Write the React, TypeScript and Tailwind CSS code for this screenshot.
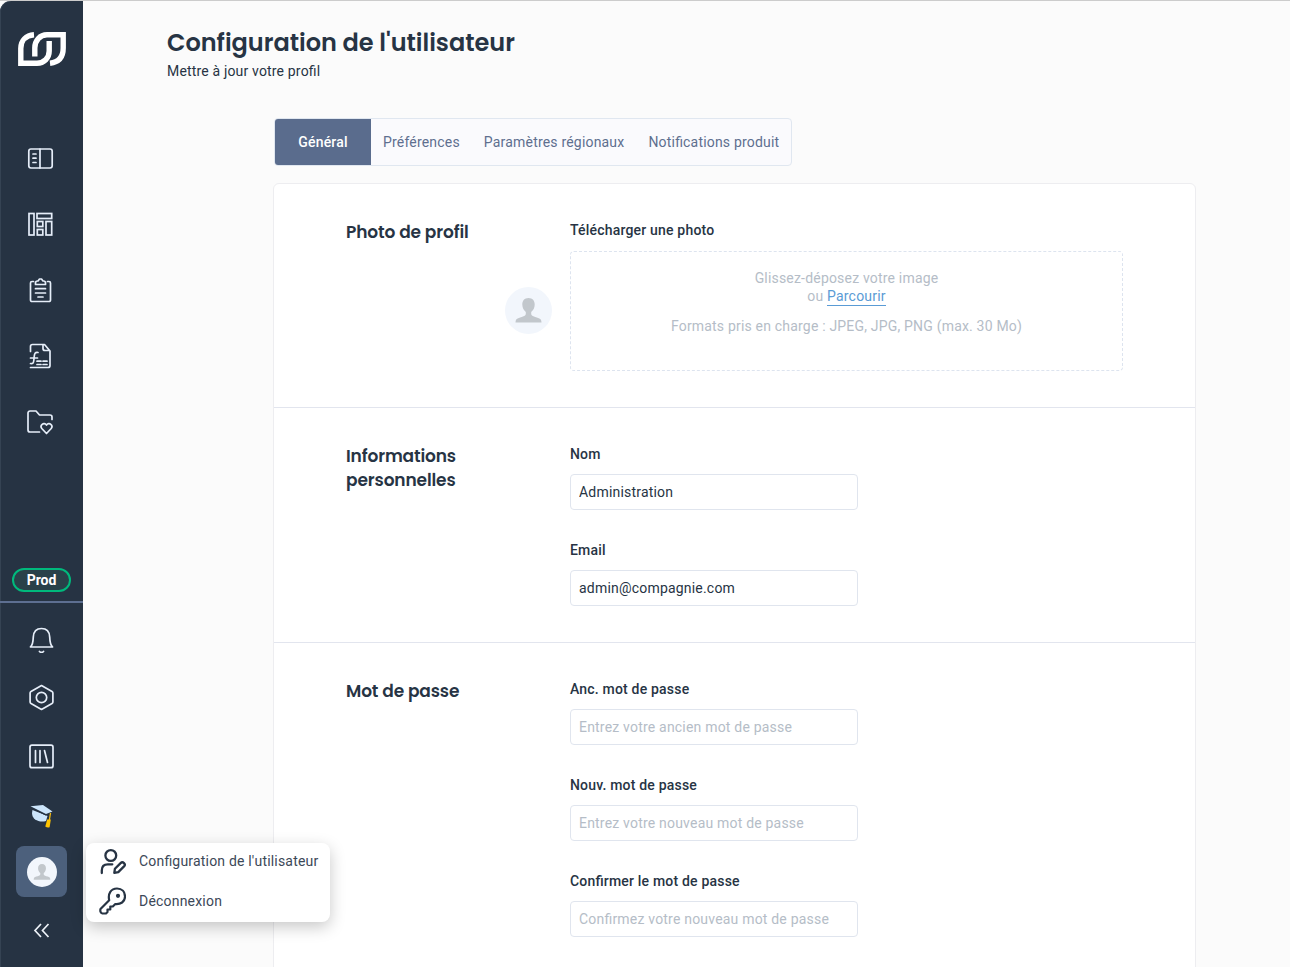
import type { ReactNode } from "react";

const heading = "font-[Poppins,Inter,sans-serif] font-semibold text-[#273444]";

function Logo() {
  return (
    <svg width="50" height="36" viewBox="17 31 50 36" fill="none" stroke="#fff" strokeWidth="5.4">
      <path d="M34 34.8C26 35.4 20.8 40.500 20.8 48.500V63.2H37C44 63.2 49.2 58 49.2 51V41" />
      <path d="M34.8 56.5V48C34.8 40.500 40 34.8 47 34.8H63.2V48C63.2 57 59 62.2 50 63.2" />
    </svg>
  );
}

function Icon({ children }: { children: ReactNode }) {
  return (
    <svg width="28" height="28" viewBox="-0.5 -0.5 28 28" fill="none" stroke="#e6eef9" strokeWidth="1.7" strokeLinecap="round" strokeLinejoin="round">
      {children}
    </svg>
  );
}

function Avatar({ className }: { className: string }) {
  return (
    <svg viewBox="0 0 47 47" className={className}>
      <circle cx="23.5" cy="23.5" r="23.5" fill="#f2f6fc" />
      <path fill="#c2c7cc" d="M23.5 11c-4 0-6.2 2.8-6.2 6.6 0 3.2 1.500 6 3.500 7.400v2.300c-.5 1.800-3.200 2.600-6.300 3.400-2.900.7-4 1.900-4 4.900h26c0-3-1.100-4.200-4-4.900-3.100-.8-5.800-1.600-6.300-3.400V25c2-1.400 3.500-4.200 3.500-7.400 0-3.800-2.200-6.600-6.200-6.600z" />
    </svg>
  );
}

function Sidebar() {
  return (
    <aside className="flex h-[966px] w-[83px] shrink-0 flex-col items-center rounded-tl-[11px] bg-[#263343] shadow-[inset_1px_0_0_#354353]">
      <div className="flex h-[124px] items-start pt-[30px] pl-px"><Logo /></div>
      <nav className="flex h-[443px] flex-col items-center pr-[3px]">
        <div className="flex h-[66px] items-center">
          <Icon>
            <rect x="2.300" y="4.500" width="23.400" height="19" rx="2.200" />
            <path d="M13.500 4.500v19M6.500 9.500h3M6.500 13.700h3M6.500 18h3" />
          </Icon>
        </div>
        <div className="flex h-[66px] items-center">
          <Icon>
            <g strokeLinejoin="miter">
              <rect x="2.500" y="3" width="5" height="21.500" />
              <rect x="10.500" y="3" width="14.700" height="5" />
              <rect x="10.800" y="11" width="5.500" height="5" />
              <rect x="10.800" y="19" width="5.500" height="5.500" />
              <rect x="19.500" y="11" width="5.700" height="13.500" />
            </g>
          </Icon>
        </div>
        <div className="flex h-[66px] items-center">
          <Icon>
            <path d="M7 5H5.500A1.500 1.500 0 0 0 4 6.500v17a1.500 1.500 0 0 0 1.500 1.500h17A1.500 1.500 0 0 0 24 23.500v-17A1.500 1.500 0 0 0 22.500 5H21M9 8V6.500a2 2 0 0 1 2-2h.5l1.500-2h2l1.500 2h.5a2 2 0 0 1 2 2V8zM9 12.200h10M9 16.500h10M11.500 20.500h5" />
          </Icon>
        </div>
        <div className="flex h-[66px] items-center">
          <Icon>
            <path d="M4 9V4A2 2 0 0 1 6 2h12l5.500 6.500v14.500a2 2 0 0 1-2 2H4M16.500 2v4a2 2 0 0 0 2 2h4M11.500 10c-3-.5-3.500 1-3.800 4l-.4 4c-.2 2.500-1 3.300-3.300 3M4 15.500h7M10.500 18.700h4M16.500 18.700h4M10.500 22h4M16.500 22h4" />
          </Icon>
        </div>
        <div className="flex h-[66px] items-center">
          <Icon>
            <path d="M13 23.500H3.500a2 2 0 0 1-2-2v-17a2 2 0 0 1 2-2h6l3.500 4h10.500a2 2 0 0 1 2 2V11M20 25l-4.700-5c-2.300-3 1.800-7 4.700-3.500 2.900-3.500 7 .5 4.700 3.500z" />
          </Icon>
        </div>
      </nav>
      <div className="flex h-6 w-[59px] items-center justify-center rounded-full border-2 border-[#00b97c] bg-[#294149] text-sm font-bold text-white">Prod</div>
      <div className="mt-[9px] h-0.5 w-full shrink-0 bg-[#5d6f91]" />
      <div className="flex h-[72px] items-center pr-px">
        <Icon>
          <path d="M3 21.500h22c-2.200-2-2.600-4.500-2.800-10C21.900 5.800 18.700 3 14 3s-7.900 2.800-8.200 8.500c-.2 5.500-.6 8-2.800 10zM12 26c1 1.200 3 1.200 4 0" />
        </Icon>
      </div>
      <div className="flex h-[44px] items-center pr-px">
        <Icon>
          <path d="M14 2l10.500 6q.9.500.9 1.500v9q0 1-.9 1.500L14 26 3.500 20q-.9-.5-.9-1.500v-9q0-1 .9-1.500z" /><circle cx="14" cy="14" r="5.200" />
        </Icon>
      </div>
      <div className="flex h-[74px] items-center pr-px">
        <Icon>
          <rect x="2.500" y="2.700" width="23" height="22.500" rx="2" /><path d="M8 8v12M12.500 8v12M17 8l3 12" />
        </Icon>
      </div>
      <div className="flex h-[46px] items-center pr-px">
        <svg width="28" height="28" viewBox="-0.5 1 28 28">
          <path fill="#cce5fb" d="M5 9l15 6-1.500 5c-6 2-14-1-14-8z" />
          <path d="M3.500 6.500L18 14l5-2" fill="none" stroke="#263343" />
          <path fill="#cce5fb" d="M3 5.200L15.500 4 25 10.500 18.500 13z" />
          <path d="M23 12l-1.500 9" stroke="#f6bc13" strokeWidth="1.300" />
          <path fill="#ffc400" d="M17.800 25.500l1.900-7h3.600l-1.200 7.700q-2.300.8-4.300-.7z" />
        </svg>
      </div>
      <div className="mt-[7px] flex size-[51px] shrink-0 items-center justify-center rounded-lg bg-[#4c607c]"><Avatar className="size-[30px]" /></div>
      <svg className="mt-[25px]" width="17" height="17" viewBox="0 0 17 17" fill="none" stroke="#edf2f8" strokeWidth="1.700"><path d="M8 2L2 8.500 8 15M15.500 2l-6 6.500 6 6.500" /></svg>
    </aside>
  );
}

function Section({ title, children, last }: { title: string; children: ReactNode; last?: boolean }) {
  return (
    <section className={last ? "flex py-9 pl-[72px]" : "flex border-b border-[#e2e5ee] py-9 pl-[72px]"}>
      <h2 className={`${heading} w-40 shrink-0 text-[17px] leading-6 tracking-[-0.13px]`}>{title}</h2>
      {children}
    </section>
  );
}

function Label({ children }: { children: ReactNode }) {
  return <div className="mb-[10px] h-5 text-sm leading-5 font-medium tracking-[0.19px] text-[#273444]">{children}</div>;
}

function Field({ label, value, placeholder }: { label: string; value?: string; placeholder?: string }) {
  return (
    <label className="block">
      <Label>{label}</Label>
      <input
        className="block h-9 w-72 rounded border border-[#e0e5ee] bg-white px-2 text-sm tracking-[0.2px] text-[#273444] placeholder:text-[#b5bdc7]"
        defaultValue={value}
        placeholder={placeholder}
      />
    </label>
  );
}

function UserMenu() {
  return (
    <div className="absolute top-[842px] left-[86px] h-[79px] w-[244px] rounded-lg bg-white shadow-[0_5px_16px_rgba(0,0,0,0.22)]">
      <div className="flex h-[36px] items-center gap-[13px] pl-[13px] text-sm tracking-[0.19px] text-[#3c4858]">
        <svg className="shrink-0" width="27" height="28" viewBox="-0.500 -1 27 28" fill="none" stroke="#273444" strokeWidth="2.300" strokeLinecap="round" strokeLinejoin="round">
          <circle cx="11.300" cy="7.500" r="5.400" />
          <path d="M2.300 25v-2.500c0-4 2-6.200 6-6.200h4.500M14.800 24.800l.6-4 5.700-5.700c2.300-2.200 5.600 1 3.400 3.300l-5.700 5.700z" />
        </svg>
        <span>Configuration de l'utilisateur</span>
      </div>
      <div className="flex h-[43px] items-center gap-[13px] pl-[13px] text-sm tracking-[0.2px] text-[#3c4858]">
        <svg className="shrink-0" width="27" height="28" viewBox="0 0 27 28" fill="none" stroke="#273444" strokeWidth="2.200" strokeLinecap="round" strokeLinejoin="round">
          <path d="M10.200 13.200C8.700 6.500 12 1.500 18 1.500c5 0 8 3.400 8 8 0 5.500-4.500 8-9.700 7.500l-2.500 2.500h-2.500v3H8.500v2.500L7 26.500H3.500C1.500 26 1 24 1.500 22z" />
          <circle cx="19" cy="8.800" r="1" fill="#273444" />
        </svg>
        <span>Déconnexion</span>
      </div>
    </div>
  );
}

export default function App() {
  return (
    <div className="relative flex h-[967px] w-[1290px] overflow-hidden border-t border-[#cccccc] bg-[#fbfbfb] font-[Roboto,sans-serif] text-[#273444] [font-feature-settings:'liga']">
      <Sidebar />
      <main className="flex-1">
        <header className="pt-6 pl-[84px]">
          <h1 className={`${heading} h-9 text-2xl leading-9`}>Configuration de l'utilisateur</h1>
          <p className="text-sm leading-5 tracking-[0.17px]">Mettre à jour votre profil</p>
        </header>
        <div className="mt-[37px] ml-[191px] flex h-12 w-[518px] items-stretch overflow-hidden rounded border border-[#e0e7f0] bg-[#fafafd] text-sm leading-[46px] tracking-[0.19px] text-[#5e6f8f]">
          <div className="w-24 shrink-0 bg-[#5a6c8d] text-center font-medium text-white">Général</div>
          <div className="shrink-0 px-3 whitespace-nowrap">Préférences</div>
          <div className="shrink-0 px-3 whitespace-nowrap">Paramètres régionaux</div>
          <div className="shrink-0 px-3 whitespace-nowrap">Notifications produit</div>
        </div>
        <div className="mt-[17px] ml-[190px] h-[900px] w-[923px] rounded-md border border-[#ededf0] bg-white">
          <Section title="Photo de profil">
            <Avatar className="mt-[67px] mr-[18px] ml-[-1px] size-[47px] shrink-0" />
            <div>
              <Label>Télécharger une photo</Label>
              <div className="mt-[11px] h-[120px] w-[553px] rounded border border-dashed border-[#dde4ef] pt-[17px] text-center text-sm leading-[18px] tracking-[0.19px] text-[#b5bdc7]">
                <p>Glissez-déposez votre image</p>
                <p>ou <a className="border-b border-[#5a9bd5] pb-px text-[#5a9bd5]">Parcourir</a></p>
                <p className="mt-3">Formats pris en charge : JPEG, JPG, PNG (max. 30 Mo)</p>
              </div>
            </div>
          </Section>
          <Section title="Informations personnelles">
            <div className="flex flex-col gap-[30px] pl-16">
              <Field label="Nom" value="Administration" />
              <Field label="Email" value="admin@compagnie.com" />
            </div>
          </Section>
          <Section title="Mot de passe" last>
            <div className="flex flex-col gap-[30px] pl-16">
              <Field label="Anc. mot de passe" placeholder="Entrez votre ancien mot de passe" />
              <Field label="Nouv. mot de passe" placeholder="Entrez votre nouveau mot de passe" />
              <Field label="Confirmer le mot de passe" placeholder="Confirmez votre nouveau mot de passe" />
            </div>
          </Section>
        </div>
      </main>
      <UserMenu />
    </div>
  );
}
